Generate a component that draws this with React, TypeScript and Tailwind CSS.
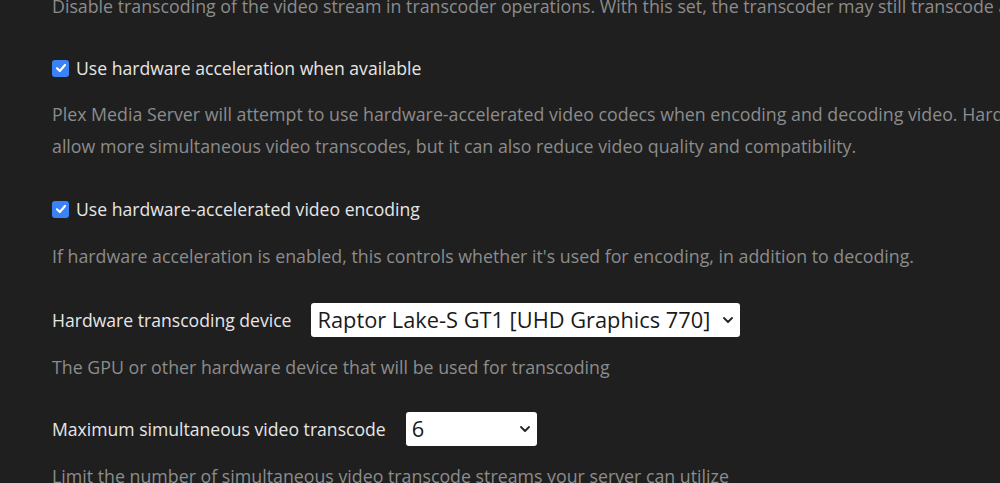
import { ChevronDown } from "lucide-react";

const Check = ({ label }: { label: string }) => (
  <div className="flex items-center gap-[7px] h-[32px]">
    <div className="w-[17px] h-[17px] rounded-[3px] bg-[#3b82f6] flex items-center justify-center">
      <svg width="12" height="12" viewBox="0 0 12 12" fill="none">
        <path d="M2 6.3 L4.8 9 L10 3" stroke="white" strokeWidth="2.2" strokeLinecap="round" strokeLinejoin="round" />
      </svg>
    </div>
    <span className="text-[17.6px] text-[#e6e6e6]">{label}</span>
  </div>
);

const Desc = ({ children }: { children: React.ReactNode }) => (
  <p className="text-[17.8px] leading-[32px] text-[#8c8c8c] whitespace-nowrap">{children}</p>
);

const SelectRow = ({ label, value, width }: { label: string; value: string; width: string }) => (
  <div className="flex items-center h-[34px]">
    <span className="text-[17.6px] text-[#e6e6e6]">{label}</span>
    <div className={`ml-[20px] h-[34px] ${width} bg-white rounded-[3px] flex items-center justify-between pl-[6px] pr-[4px]`}>
      <span className="text-[21.8px] text-[#1a1a1a] whitespace-nowrap">{value}</span>
      <ChevronDown size={16} strokeWidth={2.75} className="text-[#222] shrink-0" />
    </div>
  </div>
);

export default function App() {
  return (
    <div
      className="w-[1000px] h-[483px] overflow-hidden bg-[#1f1f1f] pl-[52px]"
      style={{ fontFamily: '"Open Sans", "Noto Sans", sans-serif' }}
    >
      <div className="-mt-[10px]">
        <Desc>Disable transcoding of the video stream in transcoder operations. With this set, the transcoder may still transcode audio</Desc>
      </div>
      <div className="mt-[30px]">
        <Check label="Use hardware acceleration when available" />
      </div>
      <div className="mt-[14px]">
        <Desc>
          Plex Media Server will attempt to use hardware-accelerated video codecs when encoding and decoding video. Hardware acceleration can
          <br />
          allow more simultaneous video transcodes, but it can also reduce video quality and compatibility.
        </Desc>
      </div>
      <div className="mt-[31px]">
        <Check label="Use hardware-accelerated video encoding" />
      </div>
      <div className="mt-[15px]">
        <Desc>If hardware acceleration is enabled, this controls whether it's used for encoding, in addition to decoding.</Desc>
      </div>
      <div className="mt-[31px]">
        <SelectRow label="Hardware transcoding device" value="Raptor Lake-S GT1 [UHD Graphics 770]" width="w-[429px]" />
      </div>
      <div className="mt-[14px]">
        <Desc>The GPU or other hardware device that will be used for transcoding</Desc>
      </div>
      <div className="mt-[29px]">
        <SelectRow label="Maximum simultaneous video transcode" value="6" width="w-[131px]" />
      </div>
      <div className="mt-[14px]">
        <Desc>Limit the number of simultaneous video transcode streams your server can utilize</Desc>
      </div>
    </div>
  );
}
